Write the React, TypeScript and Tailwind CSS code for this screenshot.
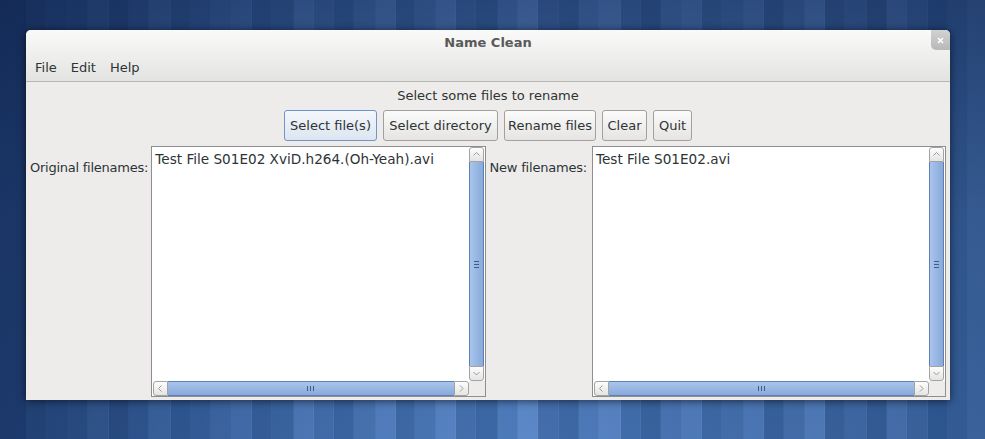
import React from 'react';

const stripes = [
  ['#24467d', 27], ['#2b5088', 20], ['#2e5590', 22], ['#305994', 19], ['#3a64a0', 21], ['#2f5791', 20],
  ['#3762a0', 20], ['#4470ae', 22], ['#3563a0', 20], ['#3b68a6', 20], ['#4472b1', 21], ['#4a78b8', 20],
  ['#3a67a4', 20], ['#3f6daa', 22], ['#5381c1', 20], ['#4774b3', 20], ['#3d6aa8', 20], ['#4a78b6', 22],
  ['#5683c4', 20], ['#3f6ca9', 19], ['#4a77b6', 21], ['#5784c4', 20], ['#436fac', 20], ['#3b68a4', 22],
  ['#4d7aba', 20], ['#5c89c9', 20], ['#456fae', 21], ['#3e6aa7', 20], ['#4f7cbc', 20], ['#5a86c6', 22],
  ['#4371af', 20], ['#3b67a3', 20], ['#4c79b8', 21], ['#5482c2', 20], ['#416eab', 20], ['#4775b3', 22],
  ['#5180c0', 20], ['#3c69a5', 20], ['#4a77b5', 21], ['#5886c6', 20], ['#3e6aa6', 20], ['#4673b2', 22],
  ['#3a66a2', 20], ['#4f7cbb', 20], ['#4270ad', 21], ['#3563a0', 20], ['#3d6aa7', 20], ['#4673b1', 22],
  ['#3b68a5', 20], ['#4572b0', 20],
] as const;

const font = "font-['DejaVu_Sans',sans-serif]";

function Chevron({ dir }: { dir: 'up' | 'down' | 'left' | 'right' }) {
  const d = {
    up: 'M1.5 5.5 L4.5 2.5 L7.5 5.5',
    down: 'M1.5 3 L4.5 6 L7.5 3',
    left: 'M5.5 1.5 L2.5 4.5 L5.5 7.5',
    right: 'M3 1.5 L6 4.5 L3 7.5',
  }[dir];
  return (
    <svg width="9" height="9" viewBox="0 0 9 9">
      <path d={d} fill="none" stroke="#9a9a9a" strokeWidth="1" />
    </svg>
  );
}

const btnEnd = 'flex items-center justify-center border border-[#a3a3a3] bg-gradient-to-b from-[#fdfdfd] to-[#e4e4e3]';

function VScroll() {
  return (
    <div className="flex w-[15px] flex-col">
      <div className={`${btnEnd} h-[15px] rounded-t-[3px]`}>
        <Chevron dir="up" />
      </div>
      <div className="flex flex-1 flex-col items-center justify-center gap-[2px] border-x border-[#5d80b6] bg-gradient-to-r from-[#a9c5ec] to-[#89a9da]">
        <div className="h-px w-[5px] bg-[#3e5d8c]" />
        <div className="h-px w-[5px] bg-[#3e5d8c]" />
        <div className="h-px w-[5px] bg-[#3e5d8c]" />
      </div>
      <div className={`${btnEnd} h-[15px] rounded-b-[3px]`}>
        <Chevron dir="down" />
      </div>
    </div>
  );
}

function HScroll() {
  return (
    <div className="flex h-[15px] flex-1">
      <div className={`${btnEnd} w-[15px] rounded-l-[3px]`}>
        <Chevron dir="left" />
      </div>
      <div className="flex flex-1 items-center justify-center gap-[2px] border-y border-[#5d80b6] bg-gradient-to-b from-[#a9c5ec] to-[#89a9da]">
        <div className="h-[5px] w-px bg-[#3e5d8c]" />
        <div className="h-[5px] w-px bg-[#3e5d8c]" />
        <div className="h-[5px] w-px bg-[#3e5d8c]" />
      </div>
      <div className={`${btnEnd} w-[15px] rounded-r-[3px]`}>
        <Chevron dir="right" />
      </div>
    </div>
  );
}

function FileBox({ text, width }: { text: string; width: string }) {
  return (
    <div className={`flex ${width} flex-col border border-[#8e8e8e] bg-white`}>
      <div className="flex flex-1">
        <div className="flex-1 pl-[3px] pt-[4px] text-[13.6px] leading-[16px] whitespace-nowrap">{text}</div>
        <div className="mr-[1px] flex">
          <VScroll />
        </div>
      </div>
      <div className="flex h-[15px] bg-[#edeceb]">
        <div className="flex flex-1 bg-white pl-[1px]">
          <HScroll />
        </div>
        <div className="w-[16px]" />
      </div>
    </div>
  );
}

function Button({ label, width, focused }: { label: string; width: string; focused?: boolean }) {
  return (
    <div
      className={`flex h-[31px] ${width} items-center justify-center rounded-[3px] border ${
        focused
          ? 'border-[#6f94c8] bg-gradient-to-b from-[#f4f7fb] to-[#dce5f1]'
          : 'border-[#a0a0a0] bg-gradient-to-b from-[#fbfbfb] to-[#e5e4e2]'
      }`}
    >
      {label}
    </div>
  );
}

export default function App() {
  return (
    <div className={`relative h-[439px] w-[985px] overflow-hidden ${font} text-[13px] text-[#2e3436]`}>
      <div className="absolute inset-0 flex">
        {stripes.map(([c, w], i) => (
          <div key={i} className="h-full shrink-0 border-r border-white/5" style={{ backgroundColor: c, width: w }} />
        ))}
      </div>
      <div className="absolute inset-0 bg-gradient-to-b from-[#0a1a40]/45 via-[#0a1a40]/10 to-transparent" />
      <div className="absolute inset-0 bg-gradient-to-r from-[#0a1a40]/30 via-transparent to-[#0a1a40]/20" />

      <div className="relative ml-[26px] mt-[30px] flex h-[370px] w-[924px] flex-col rounded-t-[5px] bg-[#edeceb] shadow-[0_1px_8px_rgba(0,0,0,0.6)]">
        <div className="relative rounded-t-[5px] border-b border-[#b6b6b4] bg-gradient-to-b from-[#fafafa] to-[#e3e3e1]">
          <div className="flex h-[25px] items-center justify-center pt-[1px] font-bold text-[#5a5a5a]">Name Clean</div>
          <div className="absolute right-0 top-0 flex h-[20px] w-[19px] items-center justify-center rounded-bl-[5px] rounded-tr-[5px] bg-gradient-to-b from-[#d2d2d2] to-[#b8b8b8]">
            <svg width="7" height="7" viewBox="0 0 7 7">
              <path d="M1 1 L6 6 M6 1 L1 6" stroke="#ffffff" strokeWidth="1.6" />
            </svg>
          </div>
          <div className="flex h-[26px] items-center pl-[2px]">
            {['File', 'Edit', 'Help'].map((m) => (
              <div key={m} className="px-[7px]">
                {m}
              </div>
            ))}
          </div>
        </div>

        <div className="flex flex-1 flex-col px-[4px] pb-[3px] pt-[5px]">
          <div className="flex h-[17px] items-center justify-center">Select some files to rename</div>
          <div className="mt-[6px] flex justify-center gap-[6px]">
            <Button label="Select file(s)" width="w-[93px]" focused />
            <Button label="Select directory" width="w-[115px]" />
            <Button label="Rename files" width="w-[92px]" />
            <Button label="Clear" width="w-[45px]" />
            <Button label="Quit" width="w-[39px]" />
          </div>
          <div className="mt-[5px] flex flex-1">
            <div className="w-[122px] whitespace-nowrap pt-[14px] leading-[16px] tracking-[-0.25px]">Original filenames:</div>
            <FileBox text="Test File S01E02 XviD.h264.(Oh-Yeah).avi" width="w-[336px]" />
            <div className="w-[107px] whitespace-nowrap pl-[4px] pt-[14px] leading-[16px] tracking-[-0.2px]">New filenames:</div>
            <FileBox text="Test File S01E02.avi" width="w-[356px]" />
          </div>
        </div>
      </div>
    </div>
  );
}
